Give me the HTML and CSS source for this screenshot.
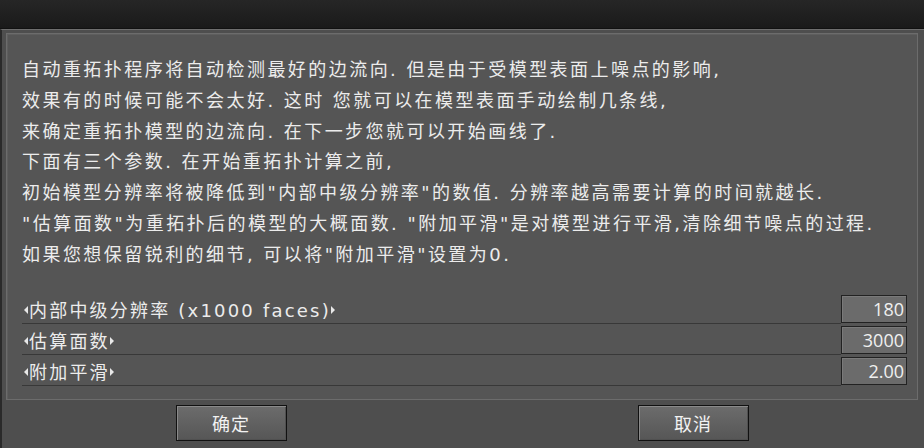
FILE: index.html
```html
<!DOCTYPE html>
<html>
<head>
<meta charset="utf-8">
<link rel="stylesheet" href="styles.css">
</head>
<body>
<div class="titlebar"></div>
<div class="dialog">
  <div class="panel">
    <div class="desc">
      <p>自动重拓扑程序将自动检测最好的边流向. 但是由于受模型表面上噪点的影响,</p>
      <p>效果有的时候可能不会太好. 这时 您就可以在模型表面手动绘制几条线,</p>
      <p>来确定重拓扑模型的边流向. 在下一步您就可以开始画线了.</p>
      <p>下面有三个参数. 在开始重拓扑计算之前,</p>
      <p>初始模型分辨率将被降低到"内部中级分辨率"的数值. 分辨率越高需要计算的时间就越长.</p>
      <p>"估算面数"为重拓扑后的模型的大概面数. "附加平滑"是对模型进行平滑,清除细节噪点的过程.</p>
      <p>如果您想保留锐利的细节, 可以将"附加平滑"设置为0.</p>
    </div>
    <div class="params">
      <div class="row">
        <div class="label"><span class="tri tri-l"></span>内部中级分辨率 (x1000 faces)<span class="tri tri-r"></span></div>
        <div class="value">180</div>
      </div>
      <div class="row">
        <div class="label"><span class="tri tri-l"></span>估算面数<span class="tri tri-r"></span></div>
        <div class="value">3000</div>
      </div>
      <div class="row">
        <div class="label"><span class="tri tri-l"></span>附加平滑<span class="tri tri-r"></span></div>
        <div class="value">2.00</div>
      </div>
    </div>
  </div>
  <div class="buttons">
    <div class="cell"><div class="btn">确定</div></div>
    <div class="cell"><div class="btn">取消</div></div>
  </div>
</div>
</body>
</html>
```

FILE: styles.css
```css
html, body {
  margin: 0;
  padding: 0;
}
body {
  width: 924px;
  height: 448px;
  overflow: hidden;
  background: #4d4d4d;
  font-family: "DejaVu Sans", "Noto Sans CJK SC", sans-serif;
  color: #ececec;
}
.titlebar {
  height: 28px;
  background: linear-gradient(#262626, #1a1a1a);
  border-bottom: 1px solid #111;
}
.dialog {
  border-top: 1px solid #6e6e6e;
  border-left: 2px solid #2a2a2a;
  background: #4e4e4e;
  height: 418px;
  padding: 3px 6px 0 4px;
}
.panel {
  background: #555555;
  border: 1px solid #6c6c6c;
  box-shadow: inset 1px 1px 0 #5e5e5e;
  padding: 21px 10px 13px 15px;
}
.desc p {
  margin: 0;
  font-size: 18px;
  line-height: 30.8px;
  letter-spacing: 2.45px;
  white-space: nowrap;
}
.params {
  margin-top: 22px;
}
.row {
  display: flex;
  align-items: stretch;
  height: 31px;
}
.label {
  flex: 1;
  display: flex;
  align-items: center;
  border-bottom: 1px solid #383838;
  margin-top: 3px;
  font-size: 18px;
  letter-spacing: 2.2px;
  padding-left: 2px;
}
.tri {
  width: 0;
  height: 0;
  border-top: 4px solid transparent;
  border-bottom: 4px solid transparent;
  margin-top: 2px;
}
.tri-l {
  border-right: 4px solid #e8e8e8;
  margin-right: 1px;
}
.tri-r {
  border-left: 4px solid #e8e8e8;
  margin-left: 0;
}
.value {
  width: 62px;
  margin-top: 2px;
  height: 26px;
  background: #6b6b6b;
  border: 1px solid #222;
  box-shadow: inset 1px 1px 0 #7a7a7a;
  font-size: 18px;
  line-height: 26px;
  text-align: right;
  padding-right: 2px;
  font-family: "Open Sans", "Liberation Sans", sans-serif;
  color: #f0f0f0;
}
.buttons {
  display: grid;
  grid-template-columns: 1fr 1fr;
  margin: 5px -6px 0 -6px;
}
.cell {
  display: flex;
  justify-content: center;
}
.btn {
  width: 109px;
  height: 34px;
  border: 1px solid #111;
  box-shadow: inset 1px 1px 0 #8a8a8a, inset -1px -1px 0 #505050;
  background: linear-gradient(#6c6c6c, #565656);
  font-family: "Noto Sans CJK SC", sans-serif;
  font-size: 18px;
  line-height: 34px;
  text-align: center;
  letter-spacing: 1px;
  color: #f2f2f2;
}
```
